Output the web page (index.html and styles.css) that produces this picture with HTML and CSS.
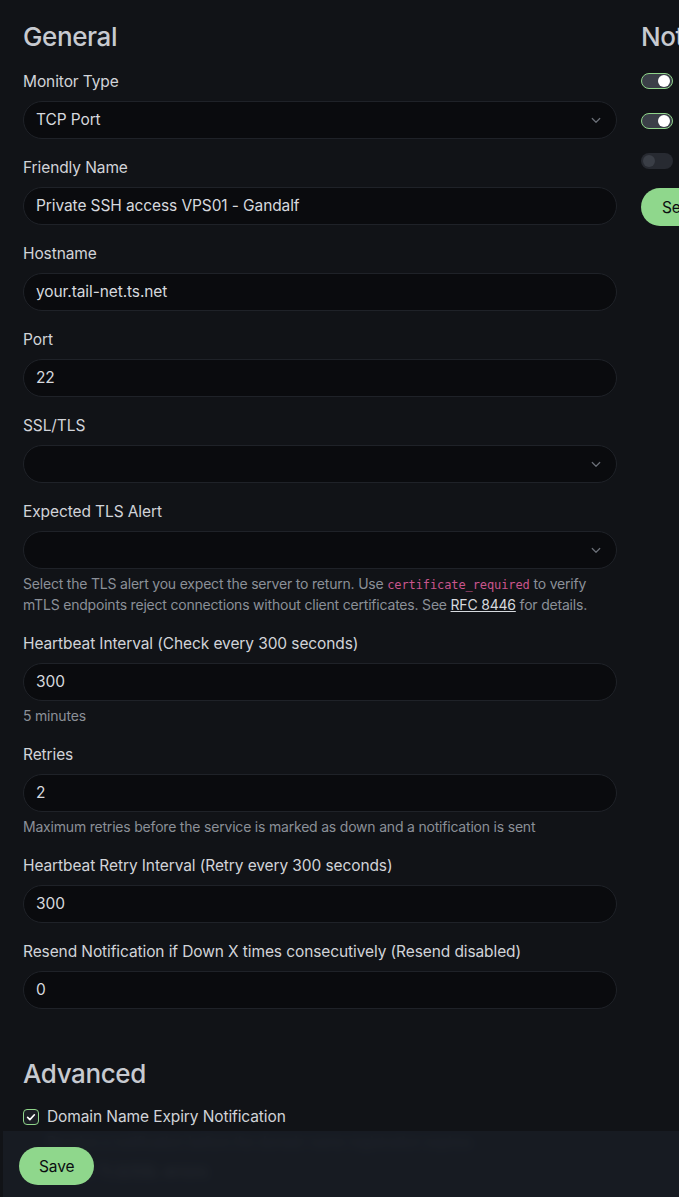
FILE: index.html
```html
<!DOCTYPE html>
<html lang="en">
<head>
<meta charset="utf-8">
<title>Edit Monitor</title>
<link rel="stylesheet" href="styles.css">
</head>
<body>
<div class="page">
  <div class="cols">
    <div class="col">
      <h2 class="section-title">General</h2>

      <div class="field">
        <label class="form-label">Monitor Type</label>
        <div class="control select"><span>TCP Port</span>
          <svg class="chev" viewBox="0 0 16 16" width="12" height="12"><path d="M3 6l5 5 5-5" fill="none" stroke="currentColor" stroke-width="1.6" stroke-linecap="round" stroke-linejoin="round"/></svg>
        </div>
      </div>

      <div class="field">
        <label class="form-label">Friendly Name</label>
        <div class="control">Private SSH access VPS01 - Gandalf</div>
      </div>

      <div class="field">
        <label class="form-label">Hostname</label>
        <div class="control">your.tail-net.ts.net</div>
      </div>

      <div class="field">
        <label class="form-label">Port</label>
        <div class="control">22</div>
      </div>

      <div class="field">
        <label class="form-label">SSL/TLS</label>
        <div class="control select"><span></span>
          <svg class="chev" viewBox="0 0 16 16" width="12" height="12"><path d="M3 6l5 5 5-5" fill="none" stroke="currentColor" stroke-width="1.6" stroke-linecap="round" stroke-linejoin="round"/></svg>
        </div>
      </div>

      <div class="field">
        <label class="form-label">Expected TLS Alert</label>
        <div class="control select"><span></span>
          <svg class="chev" viewBox="0 0 16 16" width="12" height="12"><path d="M3 6l5 5 5-5" fill="none" stroke="currentColor" stroke-width="1.6" stroke-linecap="round" stroke-linejoin="round"/></svg>
        </div>
        <div class="form-text">Select the TLS alert you expect the server to return. Use <code>certificate_required</code> to verify mTLS endpoints reject connections without client certificates. See <a href="#">RFC 8446</a> for details.</div>
      </div>

      <div class="field">
        <label class="form-label">Heartbeat Interval (Check every 300 seconds)</label>
        <div class="control">300</div>
        <div class="form-text">5 minutes</div>
      </div>

      <div class="field">
        <label class="form-label">Retries</label>
        <div class="control">2</div>
        <div class="form-text">Maximum retries before the service is marked as down and a notification is sent</div>
      </div>

      <div class="field">
        <label class="form-label">Heartbeat Retry Interval (Retry every 300 seconds)</label>
        <div class="control">300</div>
      </div>

      <div class="field">
        <label class="form-label">Resend Notification if Down X times consecutively (Resend disabled)</label>
        <div class="control">0</div>
      </div>

      <h2 class="section-title advanced">Advanced</h2>

      <div class="check-row">
        <span class="checkbox checked">
          <svg viewBox="0 0 16 16" width="12" height="12"><path d="M3.5 8.5l3 3 6-6.5" fill="none" stroke="#fff" stroke-width="2.2" stroke-linecap="round" stroke-linejoin="round"/></svg>
        </span>
        <span class="check-label">Domain Name Expiry Notification</span>
      </div>
      <div class="form-text indent">Receive a notification before the domain name registration expires</div>
      <div class="check-row">
        <span class="checkbox"></span>
        <span class="check-label">Ignore TLS/SSL errors</span>
      </div>
    </div>

    <div class="col">
      <h2 class="section-title">Notifications</h2>
      <div class="switch-row">
        <span class="switch on"><span class="knob"></span></span>
        <span class="switch-label">Telegram Alerts</span>
      </div>
      <div class="switch-row">
        <span class="switch on"><span class="knob"></span></span>
        <span class="switch-label">Email Alerts</span>
      </div>
      <div class="switch-row">
        <span class="switch off"><span class="knob"></span></span>
        <span class="switch-label">Discord Webhook</span>
      </div>
      <button class="btn">Setup Notification</button>
    </div>
  </div>

  <div class="bottom-bar">
    <button class="btn">Save</button>
  </div>
</div>
</body>
</html>
```

FILE: styles.css
```css
* { box-sizing: border-box; }

html, body {
  margin: 0;
  padding: 0;
  height: 1197px;
  overflow: hidden;
  background: #111317;
}

body {
  font-family: Inter, "Noto Sans", "DejaVu Sans", sans-serif;
  color: #d3d6db;
  font-size: 16px;
  line-height: 1.5;
}

.page {
  position: relative;
  height: 1197px;
  padding-top: 20px;
}

.cols {
  display: flex;
  padding-left: 11px;
  width: 1300px;
}

.col {
  width: 618px;
  padding: 0 12px;
  flex: none;
}

.section-title {
  margin: 0 0 15px;
  font-size: 26px;
  line-height: 34px;
  font-weight: 500;
  color: #c7cad0;
  letter-spacing: -0.4px;
}

.section-title.advanced {
  margin-top: 48px;
  margin-bottom: 14px;
}

.field {
  margin-bottom: 16px;
}

.form-label {
  display: block;
  margin-bottom: 8px;
  padding-top: 1px;
  font-size: 15.5px;
  line-height: 24px;
  color: #d1d4d9;
  letter-spacing: -0.1px;
}

.control {
  height: 38px;
  margin-top: -1px;
  border: 1px solid #1f2228;
  border-radius: 19px;
  background: #0a0b0e;
  padding: 0 12px;
  display: flex;
  align-items: center;
  font-size: 15.5px;
  color: #d6d9de;
  letter-spacing: -0.1px;
}

.control.select {
  justify-content: space-between;
  padding-right: 14px;
}

.chev {
  color: #6a6f77;
}

.form-text {
  margin-top: 4px;
  font-size: 14px;
  line-height: 21px;
  color: #8b9098;
  letter-spacing: -0.2px;
}

.form-text code {
  font-family: "DejaVu Sans Mono", "Liberation Mono", monospace;
  font-size: 12px;
  line-height: 1;
  color: #c9558d;
  letter-spacing: -0.1px;
}

.form-text a {
  color: #d6d9de;
  text-decoration: underline;
}

.form-text.indent {
  padding-left: 24px;
  margin: 2px 0 8px;
}

.check-row {
  display: flex;
  align-items: center;
  gap: 8px;
  height: 24px;
}

.checkbox {
  width: 16px;
  height: 16px;
  border-radius: 4px;
  border: 1px solid #3a4048;
  background: #0a0b0e;
  display: inline-flex;
  align-items: center;
  justify-content: center;
  flex: none;
}

.checkbox.checked {
  border-color: #8fd48a;
  background: #1b1e24;
}

.check-label {
  font-size: 15.5px;
  color: #d1d4d9;
  letter-spacing: -0.1px;
}

.switch-row {
  display: flex;
  align-items: center;
  gap: 10px;
  height: 24px;
  margin-bottom: 16px;
}

.switch-row:first-of-type {
  margin-top: 1px;
}

.switch {
  width: 32px;
  height: 16px;
  border-radius: 8px;
  position: relative;
  flex: none;
}

.switch.on {
  background: #3b3f48;
  border: 1px solid #8fd48a;
}

.switch.off {
  background: #272a31;
}

.switch .knob {
  position: absolute;
  top: 2px;
  width: 12px;
  height: 12px;
  border-radius: 50%;
}

.switch.on .knob {
  right: 2px;
  top: 1px;
  background: #ffffff;
}

.switch.off .knob {
  left: 2px;
  background: #3a3e46;
}

.switch-label {
  font-size: 15.5px;
  color: #d1d4d9;
}

.btn {
  height: 38px;
  border: 0;
  border-radius: 19px;
  background: #8fd78c;
  color: #0b0d10;
  font-family: inherit;
  font-size: 15.5px;
  padding: 0 21px;
  letter-spacing: -0.1px;
  cursor: pointer;
}

.switch-row + .switch-row + .switch-row {
  margin-bottom: 15px;
}

.bottom-bar {
  position: absolute;
  left: 3px;
  right: 0;
  bottom: 0;
  height: 66px;
  padding: 16px 16px;
  background: rgba(24, 28, 36, 0.93);
  backdrop-filter: blur(5px);
}

.bottom-bar .btn {
  padding: 0 20px;
}
```
